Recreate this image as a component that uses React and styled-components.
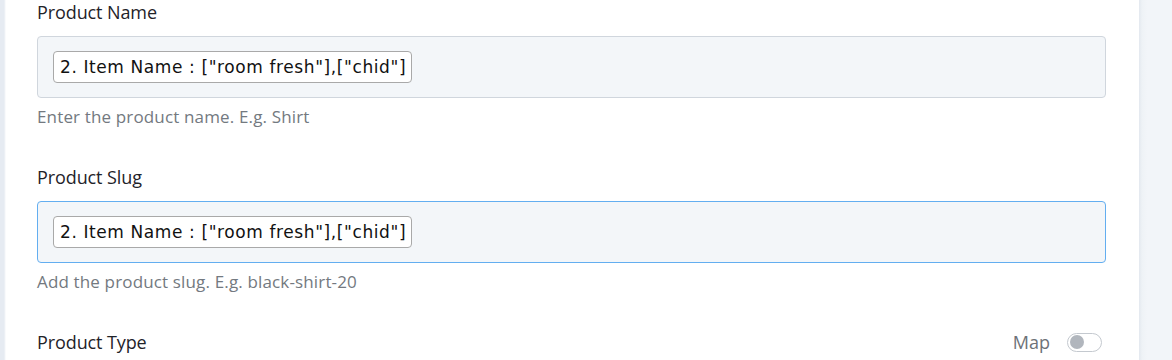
import React from 'react'
import styled, { createGlobalStyle } from 'styled-components'

const GlobalStyle = createGlobalStyle`
    body {
        margin: 0;
        background: #ffffff;
        font-family: "Open Sans", "Noto Sans", sans-serif;
    }
`

const fields = [
    { label: 'Product Name', value: '2. Item Name : ["room fresh"],["chid"]', help: 'Enter the product name. E.g. Shirt' },
    { label: 'Product Slug', value: '2. Item Name : ["room fresh"],["chid"]', help: 'Add the product slug. E.g. black-shirt-20', focused: true },
]

const App = () => {
    return (
        <Page>
            <GlobalStyle />
            <LeftEdge />
            <Main>
                {fields.map((f) => (
                    <Field key={f.label}>
                        <Label>{f.label}</Label>
                        <InputBox $focused={f.focused}>
                            <Chip>{f.value}</Chip>
                        </InputBox>
                        <Help>{f.help}</Help>
                    </Field>
                ))}
                <TypeRow>
                    <Label>Product Type</Label>
                    <ToggleWrap>
                        <ToggleLabel>Map</ToggleLabel>
                        <Toggle>
                            <Knob />
                        </Toggle>
                    </ToggleWrap>
                </TypeRow>
            </Main>
            <SidePanel />
        </Page>
    )
}

export default App

const Page = styled.div`
    display: flex;
    height: 360px;
    overflow: hidden;
`

const LeftEdge = styled.div`
    width: 6px;
    flex-shrink: 0;
    background: linear-gradient(to right, #e6ebf2 0, #e6ebf2 4px, #ffffff 6px);
`

const Main = styled.div`
    flex: 1;
    padding: 0 33px 0 31px;
    background: #ffffff;
`

const Field = styled.div`
    margin-bottom: 37px;
`

const Label = styled.div`
    font-size: 18px;
    line-height: 24px;
    color: #1f2329;
    letter-spacing: -0.1px;
`

const InputBox = styled.div`
    margin-top: 12px;
    height: 62px;
    box-sizing: border-box;
    padding: 14px 15px;
    background: #f3f6f9;
    border: 1px solid ${(p) => (p.$focused ? '#63aef0' : '#d0d6dd')};
    border-radius: 4px;
    display: flex;
    align-items: center;
`

const Chip = styled.span`
    display: inline-block;
    height: 32px;
    box-sizing: border-box;
    padding: 0 5px 0 6px;
    line-height: 30px;
    background: #ffffff;
    border: 1px solid #a9a9a9;
    border-radius: 4px;
    font-family: "DejaVu Sans", Verdana, sans-serif;
    font-size: 17px;
    letter-spacing: 0.6px;
    color: #111111;
    white-space: nowrap;
`

const Help = styled.div`
    margin-top: 8px;
    font-size: 17px;
    line-height: 22px;
    color: #737980;
    letter-spacing: 0.15px;
`

const TypeRow = styled.div`
    display: flex;
    justify-content: space-between;
    align-items: center;
`

const ToggleWrap = styled.div`
    display: flex;
    align-items: center;
    gap: 17px;
    padding-right: 4px;
`

const ToggleLabel = styled.span`
    font-size: 18px;
    color: #6d7278;
`

const Toggle = styled.div`
    width: 35px;
    height: 19px;
    box-sizing: border-box;
    border: 1px solid #c4c9cf;
    border-radius: 10px;
    background: #ffffff;
    display: flex;
    align-items: center;
    padding-left: 2px;
`

const Knob = styled.div`
    width: 14px;
    height: 14px;
    border-radius: 50%;
    background: #b1b6bd;
`

const SidePanel = styled.div`
    width: 33px;
    flex-shrink: 0;
    background: linear-gradient(to right, #e3e8ef 0, #eef2f6 3px, #f2f5f9 8px);
`
